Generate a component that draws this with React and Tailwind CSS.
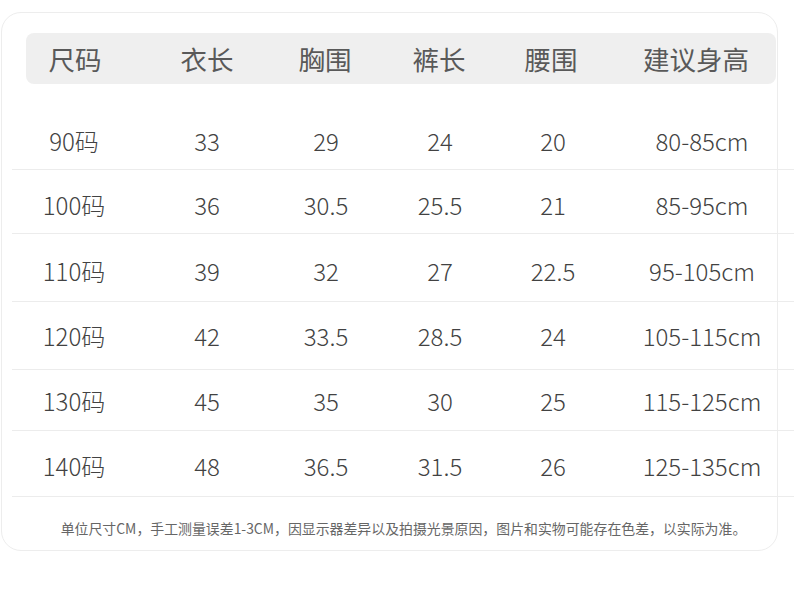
import React from "react";

const font = { fontFamily: '"Noto Sans CJK SC", "Noto Sans", sans-serif' };

const rows = [
  { s: "90码", v: ["33", "29", "24", "20", "80-85cm"], h: "h-[86px]", p: "pt-[42px]" },
  { s: "100码", v: ["36", "30.5", "25.5", "21", "85-95cm"], h: "h-[64px]", p: "pt-[20px]" },
  { s: "110码", v: ["39", "32", "27", "22.5", "95-105cm"], h: "h-[68px]", p: "pt-[22px]" },
  { s: "120码", v: ["42", "33.5", "28.5", "24", "105-115cm"], h: "h-[68px]", p: "pt-[19px]" },
  { s: "130码", v: ["45", "35", "30", "25", "115-125cm"], h: "h-[61px]", p: "pt-[16px]" },
  { s: "140码", v: ["48", "36.5", "31.5", "26", "125-135cm"], h: "h-[66px]", p: "pt-[20px]" },
];

const headers = ["尺码", "衣长", "胸围", "裤长", "腰围", "建议身高"];

export default function App() {
  return (
    <div className="w-[800px] h-[592px] bg-white pt-[12px]" style={font}>
      <div className="ml-px w-[777px] h-[539px] rounded-[20px] border border-[#ededed] bg-white">
        <div className="ml-[24px] mt-[20px] w-[750px] h-[51px] rounded-[8px] bg-[#efefef] grid grid-cols-[98px_166px_70px_158px_66px_224px] items-center text-[26.5px] leading-[30px] text-[#595959]">
          {headers.map((h) => (
            <div key={h} className="text-center whitespace-nowrap">{h}</div>
          ))}
        </div>
        <div className="ml-[10px] w-[782px]">
          {rows.map((r) => (
            <div key={r.s} className={`${r.h} ${r.p} border-b border-[#ececec] grid grid-cols-[124px_142px_96px_132px_94px_204px] text-[24px] leading-[30px] text-[#424242] font-light`}>
              <div className="text-center whitespace-nowrap">{r.s}</div>
              {r.v.map((x, i) => (
                <div key={i} className="text-center whitespace-nowrap">{x}</div>
              ))}
            </div>
          ))}
        </div>
        <div className="mt-[22px] text-center text-[13.9px] leading-[18px] text-[#666] pl-[32px] pr-[4px] whitespace-nowrap">
          单位尺寸CM，手工测量误差1-3CM，因显示器差异以及拍摄光景原因，图片和实物可能存在色差，以实际为准。
        </div>
      </div>
    </div>
  );
}
